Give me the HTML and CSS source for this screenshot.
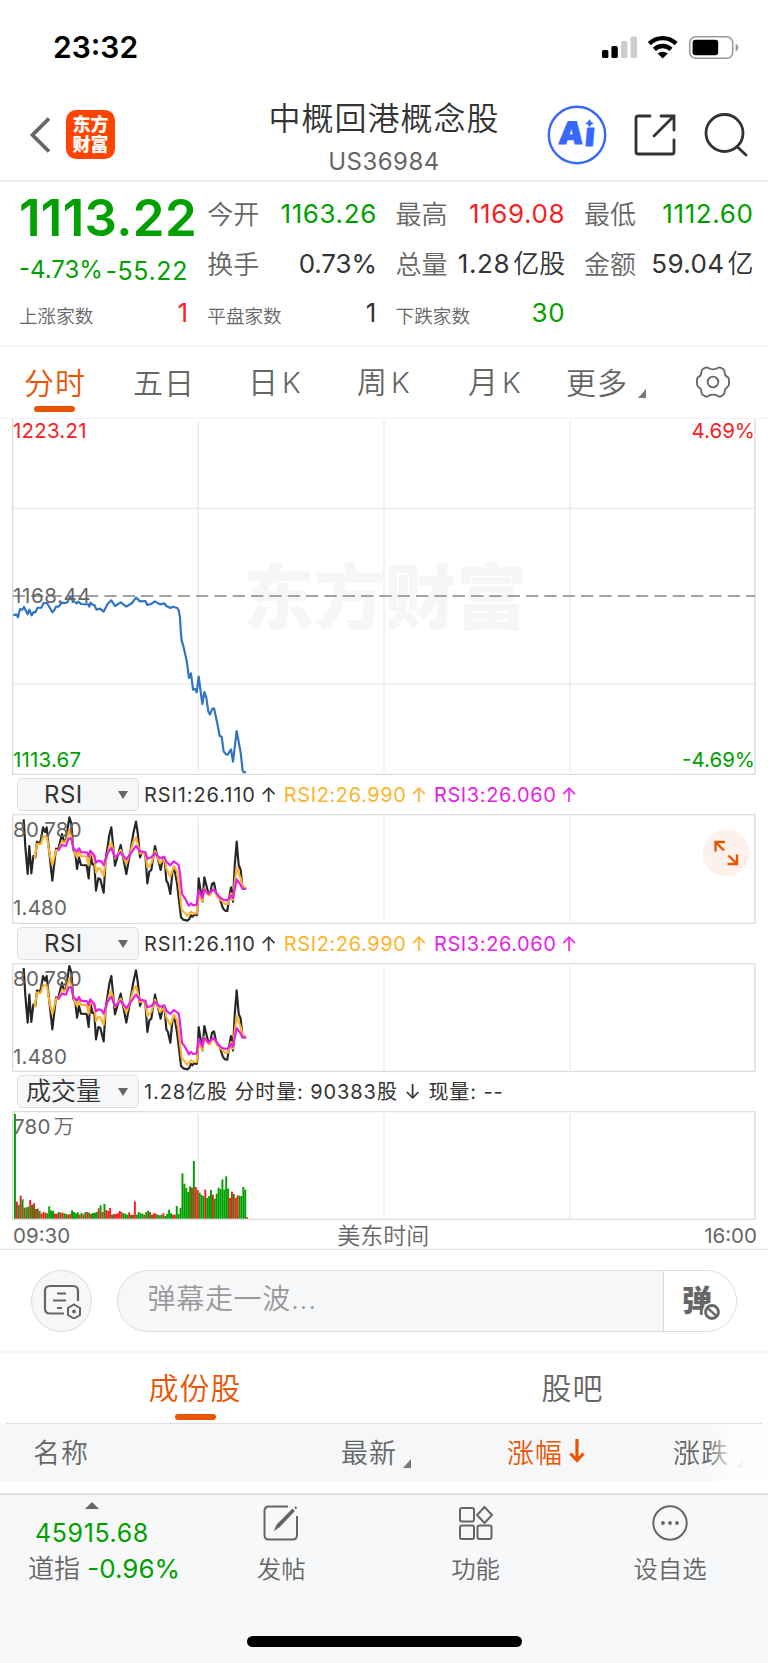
FILE: index.html
```
<!DOCTYPE html>
<html lang="zh-CN">

<head>
    <meta charset="UTF-8">
    <meta name="viewport" content="width=device-width, initial-scale=1.0">
    <title>中概回港概念股</title>
    <link rel="stylesheet" href="styles.css">
</head>

<body>
    <div class="status">
        <span class="time">23:32</span>
        <svg class="status-icons" width="138" height="26" viewBox="601 34 138 26">
            <rect x="602" y="50" width="6.4" height="8" rx="1.6" />
            <rect x="611.4" y="46" width="6.4" height="12" rx="1.6" />
            <rect x="621" y="41" width="6.4" height="17" rx="1.6" fill="#ccc" />
            <rect x="630.6" y="36.4" width="6.4" height="21.6" rx="1.6" fill="#ccc" />
            <g fill="none" stroke="#000" stroke-width="4.4">
                <path d="M649.3 43.6a19.2 19.2 0 0 1 26.8 0" />
                <path d="M654.4 49.3a12 12 0 0 1 16.6 0" />
            </g>
            <path d="M657.6 53.6a7.6 7.6 0 0 1 10.2 0l-5.1 4.8z" />
            <rect x="689.7" y="36.7" width="43" height="21.6" rx="6" fill="none" stroke="#999" stroke-width="1.6" />
            <rect x="692.6" y="39.8" width="25.6" height="15.4" rx="3" />
            <path d="M735.6 43.4q2.8 1.4 2.8 4t-2.8 4z" fill="#999" />
        </svg>
    </div>

    <div class="nav">
        <svg class="back" width="22" height="38" viewBox="0 0 22 38">
            <path d="M20 2.500L3.500 19L20 35.500" fill="none" stroke="#666" stroke-width="3.8" />
        </svg>
        <div class="brand"><span>东方</span><span>财富</span></div>
        <div class="title">
            <h1>中概回港概念股</h1>
            <p>US36984</p>
        </div>
        <svg class="icon-ai" width="60" height="60" viewBox="0 0 60 60">
            <circle cx="30" cy="30" r="28.2" fill="none" stroke="#3768fb" stroke-width="2.4" />
            <g class="ai-text" transform="skewX(-5)">
                <text class="ai-a" x="14.500" y="39.500">A</text>
                <text x="41" y="41.500">ı</text>
            </g>
            <path d="M42.5 14q1 3.200 4.200 4.200q-3.200 1-4.200 4.200q-1-3.200-4.200-4.200q3.200-1 4.200-4.200z" fill="#3768fb" />
        </svg>
        <svg class="icon-share" width="42" height="42" viewBox="0 0 42 42">
            <path d="M16 2H4Q2 2 2 4v34q0 2 2 2h34q2 0 2-2V26M27 2h13v14M40 2L20 22" />
        </svg>
        <svg class="icon-search" width="44" height="44" viewBox="0 0 44 44">
            <circle cx="20.500" cy="20" r="18.500" />
            <path d="M33 33.500l9 8.500" />
        </svg>
    </div>

    <div class="quote">
        <div class="price">
            <strong>1113.22</strong>
            <div class="change"><span>-4.73%</span><span class="diff">-55.22</span></div>
        </div>
        <div class="cell"><label>今开</label><span class="green">1163.26</span></div>
        <div class="cell"><label>最高</label><span class="red">1169.08</span></div>
        <div class="cell"><label>最低</label><span class="green">1112.60</span></div>
        <div class="cell"><label>换手</label><span class="rate">0.73%</span></div>
        <div class="cell"><label>总量</label><span>1.28<i>亿股</i></span></div>
        <div class="cell"><label>金额</label><span class="amount">59.04<i>亿</i></span></div>
        <div class="cell small"><label>上涨家数</label><span class="red">1</span></div>
        <div class="cell small"><label>平盘家数</label><span>1</span></div>
        <div class="cell small"><label>下跌家数</label><span class="green">30</span></div>
    </div>

    <div class="tabs">
        <span class="tab active">分时</span>
        <span class="tab">五日</span>
        <span class="tab k">日<b>K</b></span>
        <span class="tab k">周<b>K</b></span>
        <span class="tab k month">月<b>K</b></span>
        <span class="tab more">更多<i class="corner"></i></span>
        <svg class="gear" width="34" height="34" viewBox="-51 -51 102 102">
            <path d="M0-38Q8-38 14-42Q20-46 25-42L31-38Q35-35 35-28Q35-20 42-16Q48-13 48-7V7Q48 13 42 16Q35 20 35 28Q35 35 31 38L25 42Q20 46 14 42Q8 38 0 38Q-8 38-14 42Q-20 46-25 42L-31 38Q-35 35-35 28Q-35 20-42 16Q-48 13-48 7V-7Q-48-13-42-16Q-35-20-35-28Q-35-35-31-38L-25-42Q-20-46-14-42Q-8-38 0-38Z" />
            <circle r="16" />
        </svg>
    </div>

    <div class="charts">
        <!-- 分时图 -->
        <div class="panel main">
            <span class="watermark">东方财富</span>
            <svg width="744" height="357" viewBox="36 24 2232 1071">
                <path class="grid" d="M595 31V1086M1152 31V1086M1710 31V1086M38 295H2265M38 822H2265" />
                <path class="frame" d="M38 26V1093H2265V26" />
                <path class="dash" d="M38 558H2265" />
                <polyline class="line" points="40,615 50,614 54,622 60,597 67,599 72,591 83,613 88,599 95,616 101,606 106,607 112,594 124,593 131,579 141,579 157,607 164,599 168,590 176,590 185,578 198,579 204,574 210,560 217,570 230,580 236,575 243,582 266,583 268,590 272,578 278,584 284,586 289,599 300,596 311,605 322,583 334,571 345,588 362,577 379,590 396,579 408,563 420,574 436,573 442,585 453,582 465,574 480,583 493,580 499,588 511,594 519,590 532,594 536,601 540,622 542,660 545,692 550,708 560,752 567,804 573,790 579,839 587,837 590,847 596,800 607,882 613,846 619,863 625,905 630,913 636,898 642,895 653,945 659,978 665,980 671,1024 678,1033 683,1034 693,1018 699,1055 710,963 722,1028 728,1082 732,1087 738,1086" />
            </svg>
            <span class="mark top red">1223.21</span>
            <span class="mark mid">1168.44</span>
            <span class="mark low green">1113.67</span>
            <span class="mark top right red">4.69%</span>
            <span class="mark low right green">-4.69%</span>
        </div>

        <div class="bar">
            <div class="select"><span>RSI</span><i></i></div>
            <p class="rsi"><span>RSI1:26.110 ↑</span><span class="orange">RSI2:26.990 ↑</span><span class="pink">RSI3:26.060 ↑</span></p>
        </div>
        <div class="panel rsi1">
            <svg width="744" height="110" viewBox="36 132 2232 330">
                <path class="grid" d="M595 142V455M1152 142V455M1710 142V455" />
                <path class="frame" d="M38 134H2265V460H38Z" />
                <g id="rsiLines">
                    <polyline class="line black" points="71,148 76,230 83,312 88,228 94,310 100,258 106,262 111,215 118,222 123,208 129,172 135,186 140,172 146,230 157,332 168,236 174,240 186,192 192,215 198,210 208,142 214,160 220,240 226,250 231,297 237,262 243,285 260,286 266,325 271,250 277,283 283,282 288,362 295,325 301,328 311,368 317,270 328,195 334,172 345,287 362,225 379,312 390,250 400,190 408,155 414,195 420,262 426,245 436,250 442,340 448,305 454,300 465,228 471,255 482,300 488,268 494,270 499,332 504,340 511,372 517,308 522,290 531,340 537,390 543,442 550,449 562,452 568,447 573,436 577,440 583,434 590,436 592,420 596,325 607,395 613,322 625,370 630,375 636,342 642,338 648,368 659,385 669,415 675,422 682,423 687,385 693,352 699,395 704,290 710,215 716,285 722,300 727,350 738,357" />
                    <polyline class="line yellow" points="104,265 111,222 123,222 129,200 141,200 146,235 151,262 157,285 163,262 168,240 176,240 186,215 198,215 208,178 214,200 220,235 231,262 237,245 243,258 260,260 266,285 271,248 283,262 288,308 295,295 301,296 311,318 317,275 328,228 334,218 345,265 362,240 379,282 390,250 400,215 408,202 420,250 436,250 442,292 454,280 465,243 480,280 494,266 499,296 511,320 522,288 531,305 537,345 545,418 555,430 562,438 573,425 579,430 590,430 596,370 607,395 613,355 625,375 630,376 636,362 642,360 653,382 665,392 675,402 684,402 693,370 699,390 704,340 710,292 722,325 728,352 738,357" />
                    <polyline class="line magenta" points="174,242 186,225 198,228 206,206 214,206 220,235 231,245 237,235 243,246 262,248 266,260 271,242 283,256 288,278 295,272 304,274 311,285 322,250 334,234 345,262 362,247 379,268 396,245 408,228 420,244 436,246 442,266 454,262 465,250 480,264 493,260 499,275 511,286 522,274 536,285 540,310 546,372 555,385 562,398 567,407 573,400 579,406 590,404 596,360 607,384 613,358 625,372 636,362 642,358 653,375 665,387 678,391 688,387 693,376 699,384 710,328 722,345 728,357 738,357" />
                </g>
            </svg>
            <span class="mark top">80.780</span>
            <span class="mark low">1.480</span>
            <svg class="expand" width="48" height="48" viewBox="0 0 48 48">
                <circle cx="24" cy="24" r="23.500" fill="#fdf1eb" />
                <path d="M13.500 22.500v-9.500h9.500M13.500 13l8.500 8.500M25.500 35h9.500v-9.500M35 35l-8.500-8.500" fill="none" stroke="#ea5504" stroke-width="2.400" />
            </svg>
        </div>

        <div class="bar">
            <div class="select"><span>RSI</span><i></i></div>
            <p class="rsi"><span>RSI1:26.110 ↑</span><span class="orange">RSI2:26.990 ↑</span><span class="pink">RSI3:26.060 ↑</span></p>
        </div>
        <div class="panel rsi2">
            <svg width="744" height="109" viewBox="36 133 2232 327">
                <path class="grid" d="M595 142V453M1152 142V453M1710 142V453" />
                <path class="frame" d="M38 135H2265V458H38Z" />
                <use href="#rsiLines" />
            </svg>
            <span class="mark top">80.780</span>
            <span class="mark low">1.480</span>
        </div>

        <div class="bar">
            <div class="select wide"><span>成交量</span><i></i></div>
            <p class="vol">1.28亿股 分时量: 90383股 ↓ 现量: --</p>
        </div>
        <div class="panel volume">
            <svg width="744" height="109" viewBox="36 123 2232 327">
                <path class="grid" d="M595 132V446M1152 132V446M1710 132V446" />
                <path class="frame" d="M38 125H2265V448H38Z" />
                <g id="bars"></g>
            </svg>
            <span class="mark top">780<i>万</i></span>
        </div>
        <div class="axis"><span>09:30</span><span class="zone">美东时间</span><span>16:00</span></div>
    </div>

    <div class="danmu">
        <div class="round">
            <svg width="38" height="36" viewBox="0 0 38 36">
                <g fill="none" stroke="#666" stroke-width="2.200">
                    <path d="M21 30.500H7q-5 0-5-5V8q0-5 5-5h23q5 0 5 5v10" />
                    <path d="M14 10.500h9M10 17.500h13M14 25h5" />
                    <path d="M31 21.500l6 3.500v7l-6 3.500l-6-3.500v-7z" stroke-width="2" />
                </g>
                <circle cx="31" cy="28.500" r="2" fill="#666" />
            </svg>
        </div>
        <div class="pill">
            <span class="placeholder">弹幕走一波...</span>
            <div class="switch">
                <span>弹</span>
                <svg width="20" height="20" viewBox="0 0 18 18">
                    <circle cx="9" cy="9" r="8.500" fill="#fff" />
                    <circle cx="9" cy="9" r="5.800" fill="none" stroke="#666" stroke-width="2.600" />
                    <path d="M5 5.500l8 7" stroke="#666" stroke-width="2.200" />
                </svg>
            </div>
        </div>
    </div>

    <div class="sections">
        <span class="active">成份股</span>
        <span>股吧</span>
    </div>

    <div class="thead">
        <span class="th name">名称</span>
        <span class="th">最新<i class="corner"></i></span>
        <span class="th sort">涨幅<svg width="16" height="24" viewBox="0 0 16 24">
                <path d="M8 0v21M1.500 14.500L8 21.500l6.500-7" fill="none" stroke="#ea5504" stroke-width="3.200" />
            </svg></span>
        <span class="th last">涨跌<i class="corner"></i></span>
        <div class="fade"></div>
    </div>

    <div class="footer">
        <div class="index">
            <i class="up"></i>
            <span class="green point">45915.68</span>
            <p>道指 <span class="green">-0.96%</span></p>
        </div>
        <div class="menu">
            <svg width="36" height="36" viewBox="0 0 36 36">
                <path d="M25 1.500H6Q1.500 1.500 1.500 6v24q0 4.500 4.500 4.500h23.500q4.500 0 4.500-4.500V11" />
                <path d="M13 23.500l1.500-3.500L29.500 5l1 1L16 21.500zM32 3.500l1.500-1.500" fill="#666" stroke-width="2" />
            </svg>
            <span>发帖</span>
        </div>
        <div class="menu">
            <svg width="36" height="36" viewBox="0 0 36 36">
                <rect x="2" y="3" width="14" height="13.500" rx="2" />
                <rect x="2" y="20.500" width="14" height="13.500" rx="2" />
                <rect x="19.500" y="20.500" width="14" height="13.500" rx="2" />
                <path d="M26.500 2l7.500 8l-7.500 8l-7.500-8z" />
            </svg>
            <span>功能</span>
        </div>
        <div class="menu">
            <svg width="36" height="36" viewBox="0 0 36 36">
                <circle cx="18" cy="18" r="16.700" />
                <g fill="#666" stroke="none">
                    <circle cx="11" cy="18" r="1.900" />
                    <circle cx="18" cy="18" r="1.900" />
                    <circle cx="25" cy="18" r="1.900" />
                </g>
            </svg>
            <span>设自选</span>
        </div>
        <div class="home"></div>
    </div>

    <script>
        // 成交量柱：g 跌(绿) r 涨(红)，数字为高度
        var vols = 'g314 r51 g41 r69 g58 r33 g34 g36 r56 g42 r46 g29 r30 g23 r15 r20 r18 g16 g37 g25 g23 r15 r15 g20 r18 r18 g16 g14 r12 r14 ' +
            'g25 g20 g16 g19 r12 g17 r13 g20 r20 g18 r14 g17 g18 g20 r31 g40 r20 g44 r26 r23 r32 g12 r14 r14 r16 r23 r20 g16 g15 g12 ' +
            'r19 g12 r11 r52 g12 g20 g16 g15 r12 g20 g24 r20 g12 r16 r15 g12 g10 g12 r16 g8 g14 g27 g16 r12 r12 g38 g14 g32 g136 g105 ' +
            'g92 g80 g97 r93 g173 r95 r86 g78 g72 g68 r87 g62 g68 g86 r72 g60 g75 g93 g89 g118 g87 g127 g90 r62 r81 g74 r62 r70 g69 g68 g95 g87 r5';
        var oBars = document.getElementById('bars');
        vols.split(' ').forEach(function (item, i) {
            var h = Number(item.slice(1));
            var rect = document.createElementNS('http://www.w3.org/2000/svg', 'rect');
            rect.setAttribute('x', 42 + i * 5.71);
            rect.setAttribute('y', 446 - h);
            rect.setAttribute('width', 5.8);
            rect.setAttribute('height', h);
            rect.setAttribute('class', item[0] == 'g' ? 'fall' : 'rise');
            oBars.appendChild(rect);
        });
    </script>
</body>

</html>
```

FILE: styles.css
```
* {
    box-sizing: border-box;
}

body {
    margin: 0;
    width: 768px;
    height: 1663px;
    overflow: hidden;
    background: #fff;
    color: #333;
    font-family: Inter, "Noto Sans CJK SC", sans-serif;
    font-weight: 400;
}

h1,
p {
    margin: 0;
    font-weight: 400;
}

i {
    font-style: normal;
}

svg {
    display: block;
    flex: none;
}

.green {
    color: #00a000;
}

.red {
    color: #f71e23;
}

/* 状态栏 */
.status {
    display: flex;
    justify-content: space-between;
    align-items: center;
    height: 94px;
    padding: 0 29px 0 53px;
}

.time {
    font-size: 30px;
    font-weight: 600;
    color: #000;
}

/* 导航 */
.nav {
    display: flex;
    align-items: center;
    height: 88px;
    padding: 0 20px 4px 29px;
    border-bottom: 2px solid #ebebeb;
}

.brand {
    display: flex;
    flex-direction: column;
    justify-content: center;
    width: 49px;
    height: 49px;
    margin-left: 15px;
    margin-top: -1px;
    border-radius: 10px;
    background: #ff4400;
    color: #fff;
    font-size: 18px;
    font-weight: 900;
    line-height: 20px;
    text-align: center;
}

.title {
    width: 240px;
    margin-left: 149px;
    padding-top: 6px;
    text-align: center;
}

.title h1 {
    font-size: 32px;
    line-height: 46px;
    letter-spacing: 1px;
    font-weight: 350;
    white-space: nowrap;
}

.title p {
    font-size: 24px;
    line-height: 39px;
    letter-spacing: 0.5px;
    color: #666;
}

.icon-ai {
    margin-left: 43px;
}

.ai-text {
    font-family: Inter, sans-serif;
    font-size: 33px;
    font-weight: 900;
    fill: #3768fb;
    stroke: #3768fb;
    stroke-width: 1px;
    stroke-linejoin: round;
}

.ai-a {
    font-size: 31px;
}

.icon-share,
.icon-search {
    fill: none;
    stroke: #333;
    stroke-width: 2.8px;
    stroke-linecap: round;
}

.icon-share {
    margin-left: 27px;
}

.icon-search {
    margin-left: 28px;
}

/* 报价 */
.quote {
    display: grid;
    grid-template-columns: repeat(4, 169px);
    grid-auto-rows: 49.5px;
    column-gap: 19.3px;
    height: 164px;
    padding: 7px 0 0 19px;
}

.price {
    grid-row: span 2;
    color: #00a000;
    white-space: nowrap;
}

.price strong {
    display: block;
    font-size: 51px;
    line-height: 57px;
    letter-spacing: 0.3px;
    font-weight: 600;
}

.change {
    display: flex;
    justify-content: space-between;
    padding: 5px 0 0;
    font-size: 24px;
    line-height: 38px;
}

.change .diff {
    font-size: 25px;
    line-height: 40px;
    letter-spacing: 0.6px;
}

.cell {
    display: flex;
    justify-content: space-between;
    line-height: 49px;
    font-size: 26px;
    letter-spacing: 0.6px;
    white-space: nowrap;
}

.cell span {
    margin-right: -0.6px;
}

.cell label {
    padding-top: 1px;
    color: #666;
    letter-spacing: 0;
    font-weight: 350;
}

.cell i {
    margin-left: 3px;
    letter-spacing: 0;
    font-weight: 350;
}

.cell .rate {
    letter-spacing: -0.1px;
}

.cell .amount {
    letter-spacing: 0.4px;
}

.cell.small label {
    padding-top: 4px;
    font-size: 18.6px;
}

/* 周期切换 */
.tabs {
    display: flex;
    align-items: center;
    height: 73px;
    margin-bottom: -1px;
    padding-left: 24px;
    border-top: 1px solid #f2f2f2;
    border-bottom: 1px solid #f2f2f2;
    font-size: 30px;
    font-weight: 350;
    color: #666;
}

.tab {
    position: relative;
    width: 60px;
    margin-right: 49px;
    line-height: 68px;
    letter-spacing: 1px;
    white-space: nowrap;
}

.tab.k {
    width: 66px;
    margin-right: 43px;
    padding-left: 6px;
}

.tab.month {
    padding-left: 8px;
}

.tab.more {
    margin-left: -3px;
    margin-right: 51px;
}

.tab b {
    margin-left: 3px;
    font-size: 29px;
    font-weight: 350;
}

.active {
    position: relative;
    color: #ea5504;
}

.active::after {
    content: "";
    position: absolute;
    left: 50%;
    bottom: 5px;
    width: 41px;
    height: 6px;
    margin-left: -20px;
    border-radius: 3px;
    background: #ea5504;
}

.corner {
    display: inline-block;
    margin-left: 10px;
    border-left: 8px solid transparent;
    border-bottom: 9px solid #777;
}

.tab .corner {
    margin-bottom: -4px;
}

.gear {
    margin-top: -2px;
    margin-left: 19px;
    fill: none;
    stroke: #666;
    stroke-width: 5.5px;
}

/* 图表 */
.charts {
    height: 832px;
    padding-left: 12px;
    border-bottom: 1px solid #dfdfe3;
}

.panel {
    position: relative;
    width: 744px;
}

.panel svg {
    position: relative;
}

.grid {
    fill: none;
    stroke: #eaeaf2;
    stroke-width: 4;
}

.frame {
    fill: none;
    stroke: #dcdce2;
    stroke-width: 4;
}

.dash {
    stroke: #858585;
    stroke-width: 4;
    stroke-dasharray: 37 18;
}

.line {
    fill: none;
    stroke: #2e74c2;
    stroke-width: 6.5;
    stroke-linejoin: round;
}

.black {
    stroke: #262626;
}

.yellow {
    stroke: #fdb32c;
}

.magenta {
    stroke: #e61ee6;
}

.fall {
    fill: #00a000;
}

.rise {
    fill: #f71e23;
}

.watermark {
    position: absolute;
    left: 231px;
    top: 131px;
    color: #f6f6f6;
    font-size: 71px;
    line-height: 96px;
    font-weight: 900;
}

.mark {
    position: absolute;
    left: 1px;
    font-size: 20.5px;
    line-height: 24px;
    letter-spacing: 0.2px;
    color: #666;
}

.mark.red {
    color: #f71e23;
}

.mark.green {
    color: #00a000;
}

.mark.right {
    left: auto;
    right: 1px;
    letter-spacing: 0;
}

.main .top {
    top: 1px;
}

.main .mid {
    top: 166px;
    letter-spacing: 0.6px;
}

.main .low {
    top: 330px;
}

.rsi1 .top,
.rsi2 .top,
.volume .top {
    top: 4px;
}

.rsi1 .low,
.rsi2 .low {
    top: 82px;
}

.mark i {
    margin-left: 3px;
    font-weight: 350;
}

.panel .expand {
    position: absolute;
    right: 6px;
    top: 15px;
}

.bar {
    display: flex;
    align-items: center;
    height: 39px;
    padding-left: 5px;
    white-space: nowrap;
}

.select {
    display: flex;
    align-items: center;
    justify-content: space-between;
    width: 122px;
    height: 33px;
    padding: 0 10px 0 26px;
    border: 1px solid #dadde2;
    border-radius: 5px;
    background: #f6f7f9;
    font-size: 24px;
    line-height: 31px;
    letter-spacing: 0.5px;
}

.select.wide {
    padding-left: 8px;
    font-size: 25px;
    line-height: 29px;
    letter-spacing: 0;
    font-weight: 350;
}

.select.wide span {
    margin-top: -1px;
}

.select i {
    border: 5px solid transparent;
    border-top: 8px solid #666;
    border-bottom: 0;
}

.bar p {
    margin-left: 5px;
    font-size: 20px;
    line-height: 26px;
    letter-spacing: 0.6px;
    word-spacing: -2px;
}

.bar .vol {
    letter-spacing: 0.9px;
    word-spacing: 0;
}

.rsi {
    display: flex;
    gap: 6px;
}

.rsi span:first-child {
    letter-spacing: 0.9px;
}

.orange {
    color: #fdb32c;
}

.pink {
    color: #e61ee6;
}

.axis {
    display: flex;
    justify-content: space-between;
    width: 745px;
    padding: 0 0 0 1px;
    font-size: 20.5px;
    line-height: 32px;
    color: #666;
}

.zone {
    margin-right: 8px;
    font-size: 23px;
    font-weight: 350;
}

/* 弹幕 */
.danmu {
    display: flex;
    gap: 25px;
    height: 103px;
    padding: 20px 31px 0;
    border-bottom: 2px solid #f4f5f7;
}

.round {
    display: flex;
    align-items: center;
    justify-content: center;
    width: 61px;
    height: 62px;
    border: 1px solid #dadde2;
    border-radius: 50%;
    background: #f6f7f9;
}

.pill {
    display: flex;
    justify-content: space-between;
    width: 620px;
    height: 62px;
    border: 1px solid #dadde2;
    border-radius: 31px;
    background: #f6f7f9;
    overflow: hidden;
}

.placeholder {
    padding-left: 29.5px;
    font-size: 28px;
    line-height: 56px;
    letter-spacing: 0.7px;
    font-weight: 350;
    color: #999;
}

.switch {
    position: relative;
    width: 73px;
    padding-left: 18px;
    border-left: 1px solid #dadde2;
    background: #fff;
    color: #666;
    font-size: 30px;
    font-weight: 900;
    line-height: 58px;
}

.switch svg {
    position: absolute;
    left: 38px;
    top: 31px;
}

/* 成份股 / 股吧 */
.sections {
    display: grid;
    grid-template-columns: 378px 377px;
    height: 71px;
    margin: 0 6px;
    border-bottom: 1px solid #dadde2;
    font-size: 30px;
    line-height: 71px;
    letter-spacing: 1px;
    font-weight: 350;
    text-align: center;
    color: #666;
}

.sections .active::after {
    bottom: 4px;
}

.thead {
    display: flex;
    position: relative;
    height: 57px;
    background: #f6f7f9;
    font-size: 27px;
    line-height: 59px;
    letter-spacing: 1px;
    font-weight: 350;
    color: #666;
    white-space: nowrap;
    overflow: hidden;
}

.th {
    flex: none;
    width: 166px;
}

.th.name {
    width: 341px;
    padding-left: 33px;
}

.th .corner {
    margin-left: 6px;
    margin-bottom: -5px;
}

.th.sort {
    color: #ea5504;
}

.th svg {
    display: inline-block;
    margin-left: 6px;
}

.fade {
    position: absolute;
    top: 0;
    right: 0;
    width: 62px;
    height: 57px;
    background: linear-gradient(to right, rgba(255, 255, 255, 0), rgba(255, 255, 255, .9) 45%);
}

/* 底部栏 */
.footer {
    display: flex;
    position: relative;
    height: 170px;
    margin-top: 12px;
    border-top: 2px solid #dde1e3;
    background: #f7f8fa;
    color: #666;
}

.index {
    width: 184px;
    padding-top: 7px;
    font-size: 26px;
    line-height: 36px;
    text-align: center;
    white-space: nowrap;
}

.index .up {
    display: block;
    width: 14px;
    margin: 0 auto 6px;
    border: 7px solid transparent;
    border-bottom: 7px solid #666;
    border-top: 0;
}

.index .point {
    font-size: 25px;
    letter-spacing: 0.6px;
}

.index p {
    padding-left: 28px;
    text-align: left;
    font-weight: 350;
}

.index p span {
    font-weight: 400;
}

.menu {
    display: flex;
    flex-direction: column;
    align-items: center;
    width: 194.4px;
    padding-top: 10px;
    font-size: 24.4px;
    line-height: 36px;
    font-weight: 350;
}

.menu svg {
    margin-bottom: 10px;
    fill: none;
    stroke: #666;
    stroke-width: 2px;
}

.home {
    position: absolute;
    left: 247px;
    bottom: 16px;
    width: 275px;
    height: 11px;
    border-radius: 6px;
    background: #000;
}
```
